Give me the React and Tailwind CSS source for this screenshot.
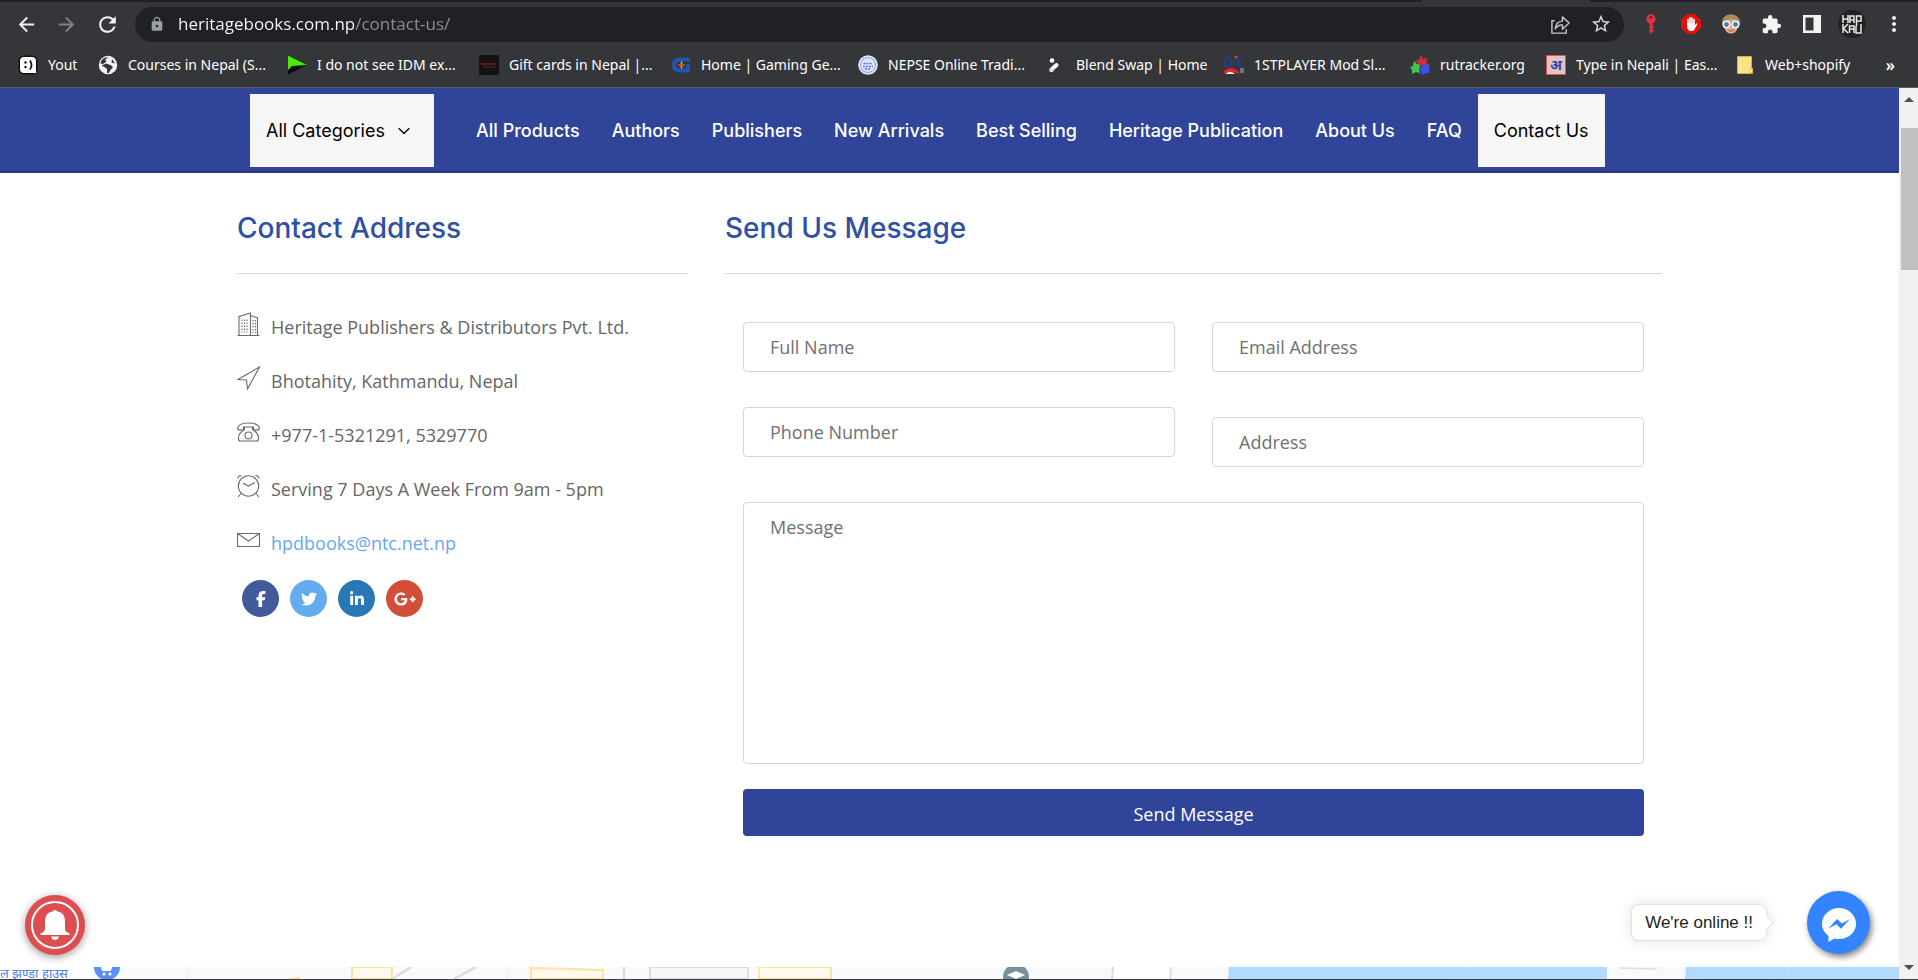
import React from "react";
import { MdArrowBack, MdArrowForward, MdRefresh, MdLock, MdStarBorder, MdExtension, MdMoreVert } from "react-icons/md";
import { FaFacebookF, FaTwitter, FaLinkedinIn, FaGooglePlusG } from "react-icons/fa6";
import { ChevronDown } from "lucide-react";

const YoutIcon = () => (
  <svg viewBox="0 0 20 20" className="size-5">
    <rect x="0.5" y="0.5" width="19" height="19" rx="5" fill="#111" />
    <path d="M6 2h8q4 0 4 4v12H6q-4 0-4-4V6q0-4 4-4z" fill="#fff" />
    <circle cx="7.5" cy="7.5" r="1.2" fill="#111" />
    <circle cx="7.5" cy="12" r="1.2" fill="#111" />
    <path d="M12 5.5q3 4.5 0 9" stroke="#111" strokeWidth="1.8" fill="none" />
  </svg>
);
const GlobeIcon = () => (
  <svg viewBox="0 0 20 20" className="size-5">
    <circle cx="10" cy="10" r="9.2" fill="#f1f3f4" />
    <path d="M10.5 2.5L7 4.5l1.5 2L5 9l-2.5-.5Q3 4 7.500 2.500zM8 8.500l4.500 1.500 2.500 2-2.500 3-2 3.500-1.500-1V14L6.500 12l-3-1.500zM14 4l3 4.500-3.500-1z" fill="#35363a" />
  </svg>
);
const IdmIcon = () => (
  <svg viewBox="0 0 20 20" className="size-5">
    <path d="M1 0.500L20 10 1 19.500z" fill="#0a0f08" />
    <path d="M1 0.500L20 10 5 11 1 15z" fill="#4be80c" />
  </svg>
);
const GiftIcon = () => (
  <svg viewBox="0 0 20 20" className="size-5">
    <rect width="20" height="20" fill="#131313" />
    <path d="M2 9h16" stroke="#b3201f" strokeWidth="1.6" strokeDasharray="1.500 0.700" />
    <path d="M4 12h12" stroke="#444" strokeWidth="0.8" />
  </svg>
);
const GamingIcon = () => (
  <svg viewBox="0 0 20 20" className="size-5">
    <path d="M19 2.500H8Q1 3 1 10t7 7.500h11V9h-4v4.500H9Q5 13 5 10t4-3.500h10z" fill="#1f57b0" />
    <path d="M10.500 6.500v7" stroke="#f2b632" strokeWidth="1.500" />
    <path d="M7 10h7" stroke="#e0522b" strokeWidth="1.500" />
  </svg>
);
const NepseIcon = () => (
  <svg viewBox="0 0 20 20" className="size-5">
    <circle cx="10" cy="10" r="9.800" fill="#dfe6fb" />
    <circle cx="10" cy="10" r="7.500" fill="none" stroke="#6f8de6" strokeWidth="1.200" strokeDasharray="1.500 1" />
    <path d="M5.500 8.500h9M5 11.500h10M7 14h6" stroke="#4f6fd8" strokeWidth="1.300" strokeDasharray="2 1" />
  </svg>
);
const BlendIcon = () => (
  <svg viewBox="0 0 20 20" className="size-5">
    <circle cx="6" cy="5.500" r="2.300" fill="#fff" />
    <path d="M6 14L10.500 10" stroke="#fff" strokeWidth="4" strokeLinecap="round" />
    <circle cx="5.500" cy="15" r="2.300" fill="#ddd" />
  </svg>
);
const PlayerIcon = () => (
  <svg viewBox="0 0 20 20" className="size-5">
    <path d="M1 2.500h5q2 2 0 4 2 2 0 4.500H1zM10 5v6M19 2.500h-5v8.500h5M14 6.500h4" fill="none" stroke="#243f8c" strokeWidth="1.500" />
    <circle cx="12" cy="2" r="1.500" fill="#e03a32" />
    <path d="M0 16q7-6 15 1v2Q7 15 0 19z" fill="#e8232a" />
    <path d="M2 18.500q5-3 9 0.500H2z" fill="#fff" />
    <path d="M17 13v5M19 13v5" stroke="#9fb2e6" />
  </svg>
);
const TrackerIcon = () => (
  <svg viewBox="0 0 20 20" className="size-5">
    <path d="M11 0l2 4 5-1-2 4 3 3-6 0-4 2-1-4-3-3 4 0z" fill="#d8283c" />
    <path d="M4 6l3 3 3 1-1 4 1 4-4-1-4 2 0-4-2-3 3-1z" fill="#3fc85a" />
    <path d="M13 8l3 2 4 0-1 4 1 4-4 0-4 2-1-4-2-3 3-1z" fill="#3c50e8" />
  </svg>
);
const NepaliIcon = () => (
  <span className="flex size-5 items-center justify-center border border-[#d9534f] bg-[#e6c3c3] text-sm leading-none font-bold text-[#2c43a8]">अ</span>
);
const FolderIcon = () => (
  <svg viewBox="0 0 20 20" className="size-5">
    <path d="M2.500 1.500h14v12h1v5h-15z" fill="#fbe38a" stroke="#d9b434" />
    <path d="M15 17.500v-4h2.500v4z" fill="#fff0b0" stroke="#d9b434" strokeWidth="0.800" />
  </svg>
);

const bookmarks = [
  ["Yout", YoutIcon, "w-[80px]"],
  ["Courses in Nepal (S...", GlobeIcon, "w-[189px]"],
  ["I do not see IDM ex...", IdmIcon, "w-[192px]"],
  ["Gift cards in Nepal |...", GiftIcon, "w-[192px]"],
  ["Home | Gaming Ge...", GamingIcon, "w-[187px]"],
  ["NEPSE Online Tradi...", NepseIcon, "w-[188px]"],
  ["Blend Swap | Home", BlendIcon, "w-[178px]"],
  ["1STPLAYER Mod Sl...", PlayerIcon, "w-[186px]"],
  ["rutracker.org", TrackerIcon, "w-[136px]"],
  ["Type in Nepali | Eas...", NepaliIcon, "w-[189px]"],
  ["Web+shopify", FolderIcon, "w-[136px]"],
];

function Browser() {
  return (
    <header className="shrink-0 border-b border-[#5c5d60] bg-[#35363a] text-white font-['Noto_Sans','Open_Sans',sans-serif]">
      <div className="flex h-0.5">
        <div className="flex-1 rounded-br-sm bg-[#202124]" />
        <div className="w-[168px]" />
        <div className="w-[328px] rounded-bl-sm bg-[#202124]" />
      </div>
      <div className="flex h-[44px] items-center pr-4 pl-[15px]">
        <button aria-label="Back" className="w-[40px]"><MdArrowBack className="size-[23px] text-[#f1f3f4]" /></button>
        <button aria-label="Forward" className="w-[40px]"><MdArrowForward className="size-[23px] text-[#7f8185]" /></button>
        <button aria-label="Reload" className="w-[40px]"><MdRefresh className="size-[25px] text-[#f1f3f4]" /></button>
        <div className="flex h-[35px] flex-1 items-center rounded-full bg-[#202124] pr-[12px] pl-[14px]">
          <MdLock className="size-4 text-[#9aa0a6]" />
          <input
            aria-label="Address bar"
            readOnly
            value="heritagebooks.com.np/contact-us/"
            className="ml-[13px] min-w-0 flex-1 bg-[linear-gradient(90deg,#ffffff_176px,#8d9094_176px)] bg-clip-text text-[17px] leading-6 text-transparent outline-none font-['Open_Sans',sans-serif]"
          />
          <button aria-label="Share" className="mr-[19px]">
            <svg viewBox="0 0 22 22" className="size-[21px]" fill="none" stroke="#c4c7c9" strokeWidth="1.500">
              <path d="M5 7H2v13h15v-4" />
              <path d="M5.500 15.500Q6 8 13 7.500V3l7 6.500-7 6.500v-4.500Q8.500 11 5.500 15.500z" strokeLinejoin="round" />
            </svg>
          </button>
          <button aria-label="Bookmark"><MdStarBorder className="size-[22px] text-[#d5d7da]" /></button>
        </div>
        <div className="flex items-center gap-[20px] pl-[17px]">
          <button aria-label="Key extension">
            <svg viewBox="0 0 20 20" className="size-5">
              <circle cx="10" cy="5" r="4.700" fill="#e02f3c" />
              <circle cx="10" cy="3.500" r="1.300" fill="#35363a" />
              <path d="M8.500 9h3v9L10 20l-1.500-2zM11 12h2v2h-2zM11 15.500h2v2h-2z" fill="#e02f3c" />
            </svg>
          </button>
          <button aria-label="Ad blocker">
            <svg viewBox="0 0 20 20" className="size-5">
              <path d="M6 0h8l6 6v8l-6 6H6l-6-6V6z" fill="#e0120d" />
              <path d="M7 10V5.500M9 9V3.800M11 9V4M13 10V5.500" stroke="#fff" strokeWidth="1.600" strokeLinecap="round" />
              <path d="M6.200 9h7.600v2.500l1.200-1.800q1-.8 1.300.3L14 14.500Q13 17 10.500 17 6.200 17 6.200 12.500z" fill="#fff" />
            </svg>
          </button>
          <button aria-label="Profile extension">
            <svg viewBox="0 0 20 20" className="size-5">
              <path d="M1 10Q1 1 10 0.500 19 1 19 10l-2.500 4Q15 19.500 10 19.500T3.500 14z" fill="#e3a784" />
              <path d="M1 9.500Q1 1 10 0.500 19 1 19 9.500 17 5 11 5.500 5 5 1 9.500z" fill="#a98a5c" />
              <path d="M7.500 16.500q2.500 1 5 0" stroke="#a85f48" fill="none" />
              <g fill="#4d7fa0" stroke="#f2f5f7" strokeWidth="1.500"><circle cx="5.500" cy="10.500" r="3.200" /><circle cx="14.500" cy="10.500" r="3.200" /></g>
            </svg>
          </button>
          <button aria-label="Extensions"><MdExtension className="size-[21px] text-[#f1f3f4]" /></button>
          <button aria-label="Side panel">
            <svg viewBox="0 0 20 20" className="size-5"><path d="M1 1h18v18H1zM3.500 3.500v13h8v-13z" fill="#f1f3f4" fillRule="evenodd" /></svg>
          </button>
          <button aria-label="Profile" className="-mx-1 flex size-7 items-center justify-center rounded-full bg-[#222222]">
            <svg viewBox="0 0 28 28" className="size-7" fill="none" stroke="#e8eaed" strokeWidth="1.500">
              <path d="M5 5v8M5 9h5M10 5v8M12 13V6h4v7M12 10h4M18.500 16V6h4.500v5h-4.500M5 14v9M10 14l-4.500 4.500 4.500 4.500M11.500 23v-7h4.500v7M11.500 19h4.500M18 16v7h5v-9" />
            </svg>
          </button>
          <button aria-label="Menu" className="-mr-1"><MdMoreVert className="size-6 text-[#f1f3f4]" /></button>
        </div>
      </div>
      <div className="flex h-[41px] items-center pb-1 pl-[18px] text-sm">
        {bookmarks.map(([name, Icon, width]) => (
          <a key={name} href="#" className={`flex shrink-0 items-center gap-[10px] whitespace-nowrap ${width}`}>
            <Icon />
            {name}
          </a>
        ))}
        <button aria-label="More bookmarks" className="mr-[23px] ml-auto text-base leading-5 font-semibold">»</button>
      </div>
    </header>
  );
}

const links = ["All Products", "Authors", "Publishers", "New Arrivals", "Best Selling", "Heritage Publication", "About Us", "FAQ"];

function SiteNav() {
  return (
    <nav className="border-b-2 border-[#27387f] bg-[#30449a] pt-1.5 pb-1 text-lg text-white font-['Inter',sans-serif]">
      <div className="mx-auto flex h-[73px] max-w-[1399px] items-stretch">
        <button className="mr-[26px] flex w-[184px] shrink-0 items-center bg-[#f6f6f6] pl-4 whitespace-nowrap text-black">
          All Categories
          <ChevronDown className="ml-[9px] size-5" strokeWidth={1.500} />
        </button>
        {links.map((l) => (
          <a key={l} href="#" className="flex shrink-0 items-center px-4 font-medium whitespace-nowrap">{l}</a>
        ))}
        <a href="#" aria-current="page" className="flex shrink-0 items-center bg-[#f6f6f6] px-4 whitespace-nowrap text-black">Contact Us</a>
      </div>
    </nav>
  );
}

const line = { viewBox: "0 0 24 24", className: "mb-1.5 size-6 shrink-0", fill: "none", stroke: "#6b6b6b", strokeWidth: 1.1 };
const BuildingIcon = () => (
  <svg {...line}>
    <path d="M0.500 23.500h22M2 23.500V4.500L13.500 1v22.500M13.500 3.500l7 2.500v17.500" />
    <path d="M5 7.500v13M7.500 7.500v13M10 7.500v13M16 8v13M18.500 8v13" strokeDasharray="1.500 1.500" />
  </svg>
);
const PlaneIcon = () => (
  <svg {...line}><path d="M0.800 13.500L22.500 1 10.500 23 9.500 14z" /></svg>
);
const PhoneIcon = () => (
  <svg {...line}>
    <path d="M0.500 9Q1 3 11.500 3T22.500 9Q20 11 16.500 9.500V7h-10v2.500Q3 11 0.500 9z" />
    <path d="M7.500 7v2.500Q1.500 13 1.500 18v1q0 2 2 2h16q2 0 2-2v-1q0-5-6-8.500V7" />
    <circle cx="11.500" cy="15.500" r="3.500" />
  </svg>
);
const ClockIcon = () => (
  <svg {...line}>
    <circle cx="11.500" cy="12" r="10.200" />
    <path d="M6 9l5.500 3L18 8.500M4 19.500L1 23M19 19.500l3 3.500M1 4.500Q1 1.500 4.500 1.500M22 4.500q0-3-3.500-3" />
  </svg>
);
const MailIcon = () => (
  <svg {...line}><path d="M0.500 5.500h22v13h-22zM0.500 5.500L11.500 13l11-7.500" /></svg>
);

const contacts = [
  [BuildingIcon, "Heritage Publishers & Distributors Pvt. Ltd."],
  [PlaneIcon, "Bhotahity, Kathmandu, Nepal"],
  [PhoneIcon, "+977-1-5321291, 5329770"],
  [ClockIcon, "Serving 7 Days A Week From 9am - 5pm"],
  [MailIcon, "hpdbooks@ntc.net.np", true],
];
const socials = [
  ["Facebook", FaFacebookF, "bg-[#42599b]"],
  ["Twitter", FaTwitter, "bg-[#65acee]"],
  ["LinkedIn", FaLinkedinIn, "bg-[#2a77b5]"],
  ["Google Plus", FaGooglePlusG, "bg-[#d34e39]"],
];

const heading = "border-b border-[#d8d8d8] pb-[28px] text-[28px] leading-[34px] font-medium text-[#3050a4] font-['Inter',sans-serif]";
const field = "w-full rounded border border-[#d5d6d8] bg-white px-[26px] text-lg text-[#666] outline-none placeholder:text-[#707070]";

function Contact() {
  return (
    <div className="mx-auto grid w-full max-w-[1425px] grid-cols-[450fr_937fr] gap-[38px] pt-[38px]">
      <section>
        <h2 className={heading}>Contact Address</h2>
        <ul className="mt-[26px] text-lg text-[#666]">
          {contacts.map(([Icon, text, link]) => (
            <li key={text} className="flex h-[54px] items-center gap-[10px]">
              <Icon />
              {link ? <a href="mailto:hpdbooks@ntc.net.np" className="text-[#69a8ee]">{text}</a> : text}
            </li>
          ))}
        </ul>
        <div className="mt-[10px] flex gap-[11px] pl-[5px]">
          {socials.map(([name, Icon, bg]) => (
            <a key={name} href="#" aria-label={name} className={`flex size-[37px] items-center justify-center rounded-full text-white ${bg}`}>
              <Icon className={name === "Google Plus" ? "size-[22px]" : "size-4"} />
            </a>
          ))}
        </div>
      </section>
      <section>
        <h2 className={heading}>Send Us Message</h2>
        <form className="mt-12 px-[18px]" onSubmit={(e) => e.preventDefault()}>
          <div className="grid grid-cols-2 gap-x-[37px]">
            <div className="flex flex-col gap-[35px]">
              <input aria-label="Full Name" placeholder="Full Name" className={`h-[50px] ${field}`} />
              <input aria-label="Phone Number" placeholder="Phone Number" className={`h-[50px] ${field}`} />
            </div>
            <div className="flex flex-col gap-[45px]">
              <input aria-label="Email Address" type="email" placeholder="Email Address" className={`h-[50px] ${field}`} />
              <input aria-label="Address" placeholder="Address" className={`h-[50px] ${field}`} />
            </div>
          </div>
          <textarea aria-label="Message" placeholder="Message" className={`mt-[35px] block h-[262px] resize-none py-[10px] ${field}`} />
          <button className="mt-[25px] h-[47px] w-full rounded bg-[#30449a] pt-0.5 text-lg text-white">Send Message</button>
        </form>
      </section>
    </div>
  );
}

function MapStrip() {
  return (
    <div className="relative mt-auto h-3 overflow-hidden bg-[#f8f9fb]">
      <svg viewBox="0 0 1899 12" preserveAspectRatio="none" className="h-3 w-full">
        <path d="M0 0h92v12H0z" fill="#fff" />
        <path d="M187 0v12M507 0v12" stroke="#eceef1" />
        <path d="M352 0h40v12h-40zM531 1l72 2v9h-72z" fill="#fef9ec" stroke="#fbe3a0" strokeWidth="2" />
        <path d="M285 12l15-2v2z" fill="#fbe3a0" />
        <path d="M392 12l19-12M454 12l22-12M624 0v12" stroke="#dadce0" strokeWidth="2.500" />
        <path d="M650 0h98v12h-98z" fill="#f6f7f9" stroke="#dcdee1" strokeWidth="2" />
        <path d="M759 0h72l0 12h-72z" fill="#fef9ec" stroke="#fbe3a0" strokeWidth="2" />
        <path d="M1113 0h58l-1 12h-58z" fill="#fff" />
        <path d="M1113 0l-1 12M1171 0l-1 12" stroke="#dcdee1" strokeWidth="2" />
        <path d="M1229 0h378v12h-379zM1686 0h213v12h-214z" fill="#b0daff" />
        <path d="M1467 0v12M1788 0v12" stroke="#bedffb" />
        <path d="M1620 1l36 1v-2" fill="none" stroke="#dcdee1" strokeWidth="1.500" />
        <circle cx="107" cy="0" r="13" fill="#5b8ff5" />
        <path d="M101 0h11l-1 4h-9z" fill="#fff" />
        <circle cx="104" cy="7" r="1.500" fill="#fff" /><circle cx="110" cy="7" r="1.500" fill="#fff" />
        <circle cx="1016" cy="10" r="13" fill="#78909c" />
        <path d="M1007 8l9-4 9 4-9 4z" fill="#fff" />
      </svg>
      <span className="absolute inset-y-0 left-0 text-[13px] leading-3 font-medium whitespace-nowrap text-[#4a80ea]">ल झण्डा हाउस</span>
    </div>
  );
}

function Scrollbar() {
  return (
    <div className="flex w-[19px] shrink-0 flex-col items-center bg-[#f1f1f1] pt-[9px] pb-[9px]">
      <svg viewBox="0 0 10 5" className="h-[5px] w-[10px]"><path d="M0 5L5 0l5 5z" fill="#505050" /></svg>
      <div className="mt-[26px] h-[142px] w-[17px] self-end bg-[#c1c1c1]" />
      <svg viewBox="0 0 10 5" className="mt-auto h-[5px] w-[10px]"><path d="M0 0l5 5 5-5z" fill="#505050" /></svg>
    </div>
  );
}

export default function App() {
  return (
    <div className="flex h-screen flex-col overflow-hidden border-b border-[#3c3d40] bg-white font-['Open_Sans',sans-serif]">
      <Browser />
      <div className="flex min-h-0 flex-1">
        <main className="relative flex min-w-0 flex-1 flex-col">
          <SiteNav />
          <Contact />
          <MapStrip />
          <button aria-label="Notifications" className="absolute bottom-6 left-[25px] flex size-[60px] items-center justify-center rounded-full bg-[#dc4e50] shadow-[0_2px_8px_rgba(0,0,0,0.4)]">
            <span className="flex size-[48px] items-center justify-center rounded-full border-2 border-white">
              <svg viewBox="0 0 30 30" className="size-[30px]" fill="#fff">
                <path d="M15 0q1.500 0 1.800 1.300Q25 2.500 25 11v8q0 2.500 4.500 4.500v1.500H.5v-1.500Q5 21.500 5 19v-8q0-8.500 8.200-9.700Q13.500 0 15 0zM11 26.500h8q-1 3.500-4 3.500t-4-3.500z" />
              </svg>
            </span>
          </button>
          <div className="absolute right-[29px] bottom-[25px] flex items-center gap-[40px]">
            <div className="relative rounded-lg border border-[#e0e1e3] bg-white px-[13px] text-[17px] leading-[35px] text-[#1c1e21] shadow-[0_0_14px_rgba(0,0,0,0.12)] font-['Liberation_Sans',sans-serif]">
              We're online !!
              <span className="absolute top-[12px] -right-[6px] size-[11px] rotate-45 border-t border-r border-[#e0e1e3] bg-white" />
            </div>
            <button aria-label="Open chat" className="flex size-[63px] items-center justify-center rounded-full bg-[#3584ff] shadow-[2px_3px_6px_rgba(0,0,0,0.5)]">
              <svg viewBox="0 0 34 34" className="mt-1 size-[34px]">
                <path d="M17 0C7.500 0 0 7 0 16q0 7 6.500 12v6l6-3.500Q15 31 17 31c9.500 0 17-6.500 17-15.200S26.500 0 17 0z" fill="#fff" />
                <path d="M6.500 20.500L15 11l5 4.500 8-4.500-9 9.800-4.500-4.600z" fill="#3584ff" />
              </svg>
            </button>
          </div>
        </main>
        <Scrollbar />
      </div>
    </div>
  );
}
